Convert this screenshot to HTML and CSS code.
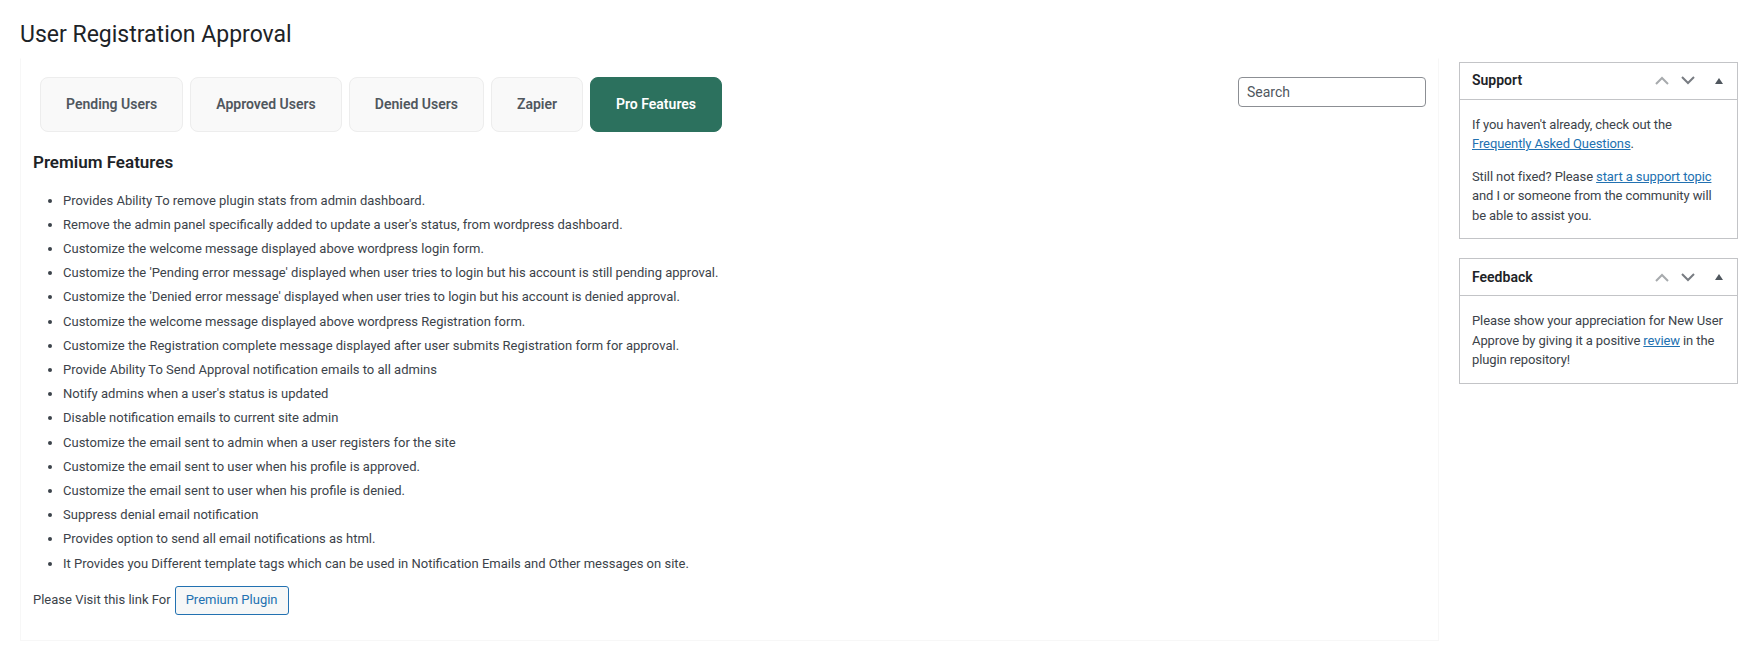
FILE: index.html
```html
<!DOCTYPE html>
<html lang="en">
<head>
    <meta charset="UTF-8">
    <meta name="viewport" content="width=device-width, initial-scale=1.0">
    <title>User Registration Approval</title>
    <link rel="stylesheet" href="styles.css">
</head>
<body>
    <div class="wrap">
        <h1>User Registration Approval</h1>

        <div class="columns">
            <div class="main">
                <div class="topbar">
                    <ul class="tabs">
                        <li class="tab">Pending Users</li>
                        <li class="tab">Approved Users</li>
                        <li class="tab">Denied Users</li>
                        <li class="tab">Zapier</li>
                        <li class="tab active">Pro Features</li>
                    </ul>
                    <input class="search" type="text" placeholder="Search">
                </div>

                <h2 class="section-title">Premium Features</h2>
                <ul class="features">
                    <li>Provides Ability To remove plugin stats from admin dashboard.</li>
                    <li>Remove the admin panel specifically added to update a user's status, from wordpress dashboard.</li>
                    <li>Customize the welcome message displayed above wordpress login form.</li>
                    <li>Customize the 'Pending error message' displayed when user tries to login but his account is still pending approval.</li>
                    <li>Customize the 'Denied error message' displayed when user tries to login but his account is denied approval.</li>
                    <li>Customize the welcome message displayed above wordpress Registration form.</li>
                    <li>Customize the Registration complete message displayed after user submits Registration form for approval.</li>
                    <li>Provide Ability To Send Approval notification emails to all admins</li>
                    <li>Notify admins when a user's status is updated</li>
                    <li>Disable notification emails to current site admin</li>
                    <li>Customize the email sent to admin when a user registers for the site</li>
                    <li>Customize the email sent to user when his profile is approved.</li>
                    <li>Customize the email sent to user when his profile is denied.</li>
                    <li>Suppress denial email notification</li>
                    <li>Provides option to send all email notifications as html.</li>
                    <li>It Provides you Different template tags which can be used in Notification Emails and Other messages on site.</li>
                </ul>
                <p class="visit">Please Visit this link For <a class="button" href="#">Premium Plugin</a></p>
            </div>

            <div class="sidebar">
                <div class="postbox">
                    <div class="postbox-header">
                        <h2>Support</h2>
                        <div class="handles">
                            <span class="handle handle-up">
                                <svg width="14" height="9" viewBox="0 0 14 9"><polyline points="1,8 7,2 13,8" fill="none" stroke="currentColor" stroke-width="2"/></svg>
                            </span>
                            <span class="handle handle-down">
                                <svg width="14" height="9" viewBox="0 0 14 9"><polyline points="1,1 7,7 13,1" fill="none" stroke="currentColor" stroke-width="2"/></svg>
                            </span>
                            <span class="handle handle-toggle">
                                <svg width="8" height="6" viewBox="0 0 8 6"><polygon points="0,6 4,0 8,6" fill="currentColor"/></svg>
                            </span>
                        </div>
                    </div>
                    <div class="inside">
                        <p>If you haven't already, check out the <a href="#">Frequently Asked Questions</a>.</p>
                        <p>Still not fixed? Please <a href="#">start a support topic</a> and I or someone from the community will be able to assist you.</p>
                    </div>
                </div>

                <div class="postbox">
                    <div class="postbox-header">
                        <h2>Feedback</h2>
                        <div class="handles">
                            <span class="handle handle-up">
                                <svg width="14" height="9" viewBox="0 0 14 9"><polyline points="1,8 7,2 13,8" fill="none" stroke="currentColor" stroke-width="2"/></svg>
                            </span>
                            <span class="handle handle-down">
                                <svg width="14" height="9" viewBox="0 0 14 9"><polyline points="1,1 7,7 13,1" fill="none" stroke="currentColor" stroke-width="2"/></svg>
                            </span>
                            <span class="handle handle-toggle">
                                <svg width="8" height="6" viewBox="0 0 8 6"><polygon points="0,6 4,0 8,6" fill="currentColor"/></svg>
                            </span>
                        </div>
                    </div>
                    <div class="inside">
                        <p>Please show your appreciation for New User Approve by giving it a positive <a href="#">review</a> in the plugin repository!</p>
                    </div>
                </div>
            </div>
        </div>
    </div>
</body>
</html>
```

FILE: styles.css
```css
body{
    margin:0;
    background:#fff;
    color:#3c434a;
    font-family:"Segoe UI", Roboto, "Liberation Sans", sans-serif;
    font-size:13px;
    line-height:1.4;
}
a{
    color:#2271b1;
}
.wrap{
    padding:0 21px 0 20px;
}
h1{
    margin:0 0 8px;
    padding-top:20px;
    font-size:23px;
    font-weight:400;
    line-height:1.3;
    color:#1d2327;
}
.columns{
    display:flex;
    align-items:flex-start;
    gap:20px;
}

/* main card */
.main{
    flex:1;
    border:1px solid #f7f7f7;
    border-top-color:#fff;
    box-shadow:0 1px 1px rgba(0,0,0,.02);
    padding:18px 12px 25px;
}
.topbar{
    display:flex;
    justify-content:space-between;
    align-items:flex-start;
}
.tabs{
    display:flex;
    gap:7px;
    margin:0;
    padding:0 0 0 7px;
    list-style:none;
}
.tab{
    display:flex;
    align-items:center;
    height:55px;
    box-sizing:border-box;
    padding:0 25px;
    border:1px solid #ededed;
    border-radius:8px;
    background:#f9f9f9;
    color:#50575e;
    font-size:14px;
    font-weight:600;
}
.tab.active{
    background:#2c715e;
    border-color:#2c715e;
    color:#fff;
}
.search{
    width:188px;
    height:30px;
    box-sizing:border-box;
    padding:0 8px;
    border:1px solid #8c8f94;
    border-radius:4px;
    font-family:inherit;
    font-size:14px;
    color:#2c3338;
}
.search::placeholder{
    color:#50575e;
}
.section-title{
    margin:19px 0 0;
    font-size:17px;
    font-weight:600;
    line-height:1.4;
    color:#1d2327;
}
.features{
    margin:17px 0 0;
    padding-left:30px;
    list-style:disc;
}
.features li{
    margin-bottom:6px;
}
.visit{
    display:flex;
    align-items:center;
    margin:13px 0 0;
}
.button{
    display:inline-flex;
    align-items:center;
    height:29px;
    box-sizing:border-box;
    margin-left:4px;
    padding:0 10px;
    border:1px solid #2271b1;
    border-radius:3px;
    background:#f6f7f7;
    color:#2271b1;
    text-decoration:none;
}

/* sidebar boxes */
.sidebar{
    width:279px;
    margin-top:4px;
}
.postbox{
    border:1px solid #c3c4c7;
    background:#fff;
    margin-bottom:19px;
}
.postbox-header{
    display:flex;
    justify-content:space-between;
    align-items:center;
    height:36px;
    border-bottom:1px solid #c3c4c7;
    padding-left:12px;
}
.postbox-header h2{
    margin:0;
    font-size:14px;
    font-weight:600;
    color:#1d2327;
}
.handles{
    display:flex;
    height:36px;
}
.handle{
    display:flex;
    align-items:center;
    justify-content:center;
    width:26px;
}
.handle-up{
    color:#a7aaad;
}
.handle-down{
    color:#787c82;
}
.handle-toggle{
    width:36px;
    color:#50575e;
}
.inside{
    padding:2px 12px 0;
    line-height:1.5;
    letter-spacing:-0.1px;
}
.inside p{
    margin:13px 0;
}
```
